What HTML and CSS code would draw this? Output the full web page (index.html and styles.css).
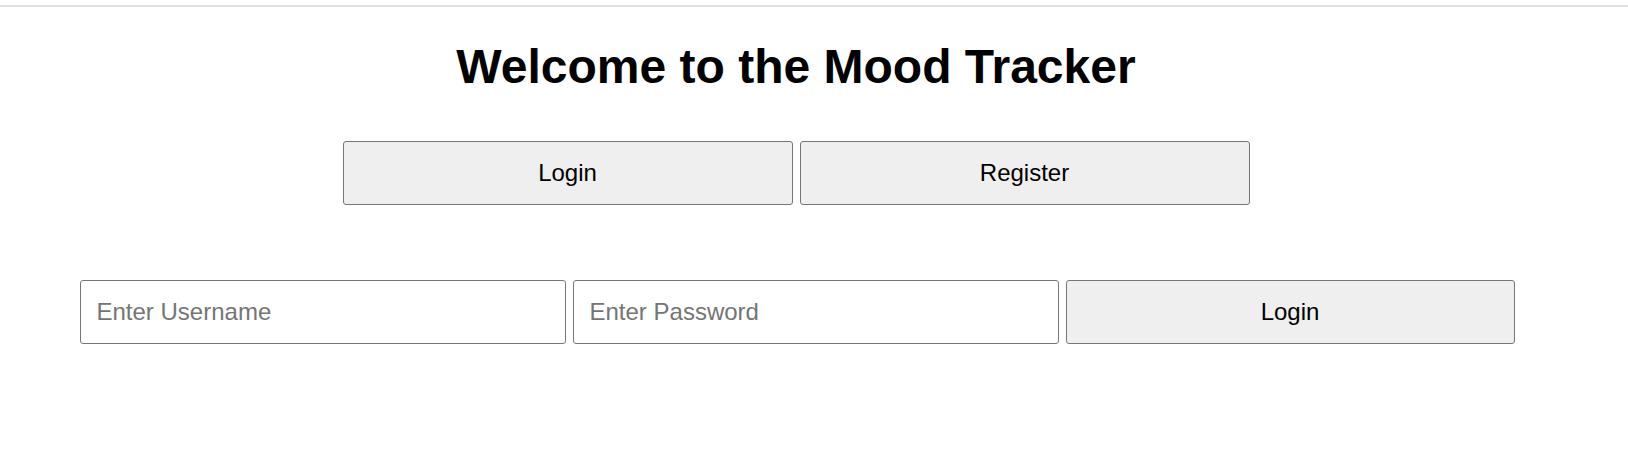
FILE: index.html
```html
<!DOCTYPE html>
<html lang="en">
<head>
<meta charset="utf-8">
<title>Mood Tracker</title>
<link rel="stylesheet" href="styles.css">
</head>
<body>
<div class="topbar"></div>
<main class="page">
  <h1 class="title">Welcome to the Mood Tracker</h1>
  <div class="tabs">
    <button class="btn tab">Login</button>
    <button class="btn tab">Register</button>
  </div>
  <form class="login-form">
    <input class="field" type="text" placeholder="Enter Username">
    <input class="field" type="password" placeholder="Enter Password">
    <button class="btn submit" type="button">Login</button>
  </form>
</main>
</body>
</html>
```

FILE: styles.css
```css
html, body {
  margin: 0;
  padding: 0;
  background: #ffffff;
}

body {
  font-family: "Liberation Sans", Arial, sans-serif;
  color: #000000;
}

.topbar {
  height: 5px;
  border-bottom: 2px solid #e0e0e0;
}

.page {
  width: 1592px;
  display: flex;
  flex-direction: column;
  align-items: center;
}

.title {
  margin: 32px 0 0 0;
  font-size: 48px;
  font-weight: bold;
  line-height: 55px;
  text-align: center;
}

.tabs {
  display: flex;
  gap: 7px;
  margin-top: 47px;
}

.btn {
  font-family: "Liberation Sans", Arial, sans-serif;
  font-size: 24px;
  line-height: 28px;
  color: #000000;
  background: #efefef;
  border: 1px solid #767676;
  border-radius: 3px;
  padding: 0 16px;
  margin: 0;
  box-sizing: border-box;
  height: 64px;
  text-align: center;
}

.tab {
  width: 450px;
}

.login-form {
  display: flex;
  gap: 7px;
  margin: 75px 0 0 2px;
}

.field {
  font-family: "Liberation Sans", Arial, sans-serif;
  font-size: 24px;
  line-height: 28px;
  color: #000000;
  background: #ffffff;
  border: 1px solid #767676;
  border-radius: 3px;
  padding: 0 16px;
  margin: 0;
  box-sizing: border-box;
  height: 64px;
  width: 486px;
  outline: none;
}

.field::placeholder {
  color: #757575;
  opacity: 1;
}

.submit {
  width: 449px;
}
```
